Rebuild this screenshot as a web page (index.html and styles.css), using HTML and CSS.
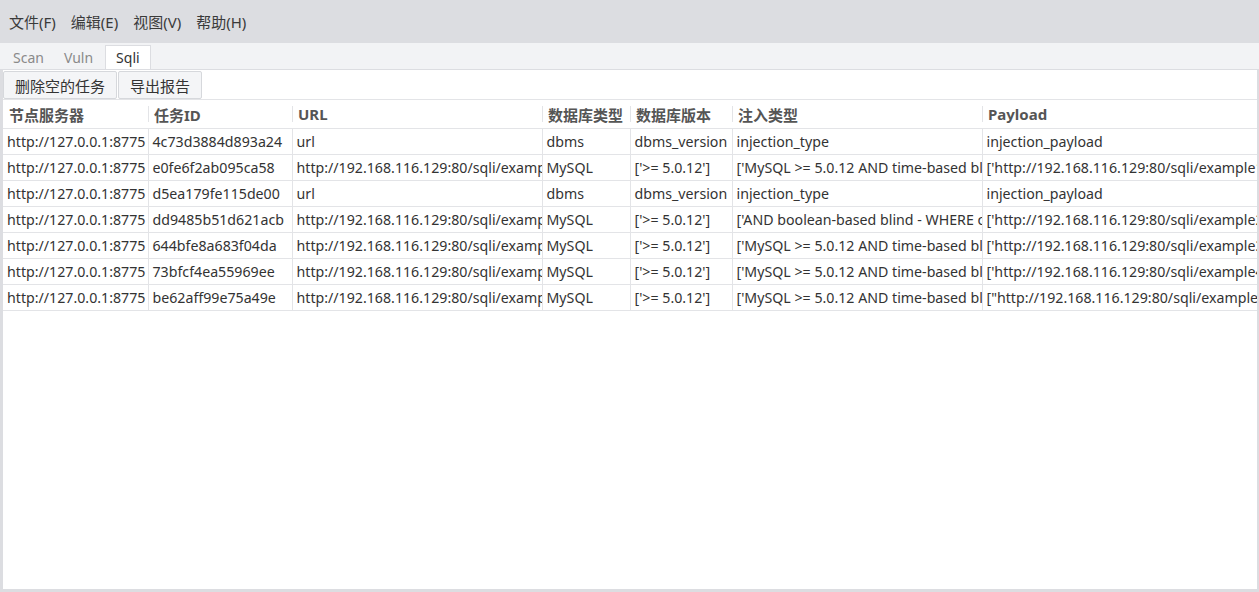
FILE: index.html
```html
<!DOCTYPE html>
<html lang="zh">
<head>
<meta charset="utf-8">
<link rel="stylesheet" href="styles.css">
</head>
<body>
<div class="menubar">
  <span class="menu">文件(F)</span>
  <span class="menu">编辑(E)</span>
  <span class="menu">视图(V)</span>
  <span class="menu">帮助(H)</span>
</div>
<div class="tabbar">
  <span class="tab">Scan</span>
  <span class="tab">Vuln</span>
  <span class="tab active">Sqli</span>
</div>
<div class="panel">
  <div class="toolbar">
    <button class="btn">删除空的任务</button>
    <button class="btn">导出报告</button>
  </div>
  <div class="tablewrap">
    <table class="grid">
      <colgroup>
        <col class="c1"><col class="c2"><col class="c3"><col class="c4"><col class="c5"><col class="c6"><col class="c7">
      </colgroup>
      <thead>
        <tr><th>节点服务器</th><th>任务ID</th><th>URL</th><th>数据库类型</th><th>数据库版本</th><th>注入类型</th><th>Payload</th></tr>
      </thead>
      <tbody>
        <tr><td>http://127.0.0.1:8775</td><td>4c73d3884d893a24</td><td>url</td><td>dbms</td><td>dbms_version</td><td>injection_type</td><td>injection_payload</td></tr>
        <tr><td>http://127.0.0.1:8775</td><td>e0fe6f2ab095ca58</td><td>http://192.168.116.129:80/sqli/example1.php?name=root</td><td>MySQL</td><td>['&gt;= 5.0.12']</td><td>['MySQL &gt;= 5.0.12 AND time-based blind (query SLEEP)']</td><td>['http://192.168.116.129:80/sqli/example1.php?name=root']</td></tr>
        <tr><td>http://127.0.0.1:8775</td><td>d5ea179fe115de00</td><td>url</td><td>dbms</td><td>dbms_version</td><td>injection_type</td><td>injection_payload</td></tr>
        <tr><td>http://127.0.0.1:8775</td><td>dd9485b51d621acb</td><td>http://192.168.116.129:80/sqli/example2.php?name=root</td><td>MySQL</td><td>['&gt;= 5.0.12']</td><td>['AND boolean-based blind - WHERE or HAVING clause']</td><td>['http://192.168.116.129:80/sqli/example2.php?name=root']</td></tr>
        <tr><td>http://127.0.0.1:8775</td><td>644bfe8a683f04da</td><td>http://192.168.116.129:80/sqli/example3.php?name=root</td><td>MySQL</td><td>['&gt;= 5.0.12']</td><td>['MySQL &gt;= 5.0.12 AND time-based blind (query SLEEP)']</td><td>['http://192.168.116.129:80/sqli/example3.php?name=root']</td></tr>
        <tr><td>http://127.0.0.1:8775</td><td>73bfcf4ea55969ee</td><td>http://192.168.116.129:80/sqli/example4.php?id=2</td><td>MySQL</td><td>['&gt;= 5.0.12']</td><td>['MySQL &gt;= 5.0.12 AND time-based blind (query SLEEP)']</td><td>['http://192.168.116.129:80/sqli/example4.php?id=2']</td></tr>
        <tr><td>http://127.0.0.1:8775</td><td>be62aff99e75a49e</td><td>http://192.168.116.129:80/sqli/example5.php?id=2</td><td>MySQL</td><td>['&gt;= 5.0.12']</td><td>['MySQL &gt;= 5.0.12 AND time-based blind (query SLEEP)']</td><td>["http://192.168.116.129:80/sqli/example5.php?id=2"]</td></tr>
      </tbody>
    </table>
  </div>
</div>
</body>
</html>
```
FILE: styles.css
```css
html, body {
  margin: 0;
  padding: 0;
  height: 100%;
}
body {
  background: #dcdde1;
  font-family: "Noto Sans", "Noto Sans CJK SC", sans-serif;
  font-size: 14px;
  color: #333;
  display: flex;
  flex-direction: column;
  overflow: hidden;
}
.menubar {
  height: 43px;
  display: flex;
  align-items: center;
  padding-left: 9px;
  gap: 15px;
  background: #dcdde1;
  color: #3a3a3a;
  flex: none;
}
.menu {
  font-size: 15px;
}
.tabbar {
  height: 26px;
  background: #f2f3f5;
  display: flex;
  align-items: flex-end;
  padding-left: 3px;
  flex: none;
  box-sizing: border-box;
}
.tab {
  height: 24px;
  line-height: 24px;
  padding: 0 9px;
  color: #8a8a8a;
  font-size: 14px;
  box-sizing: border-box;
  border: 1px solid transparent;
  border-bottom: none;
}
.tab.active {
  background: #fff;
  color: #333;
  border-color: #dcdde1;
  margin-left: 2px;
  padding: 0 10px;
}
.panel {
  flex: 1;
  margin: 0 2px 3px 3px;
  background: #fff;
  border-top: 1px solid #dcdde1;
  display: flex;
  flex-direction: column;
  overflow: hidden;
}
.toolbar {
  display: flex;
  gap: 1px;
  height: 30px;
  flex: none;
  padding-top: 1px;
  box-sizing: border-box;
  border-bottom: 1px solid #e3e4e7;
}
.btn {
  font-family: inherit;
  font-size: 15px;
  color: #333;
  background: #f4f5f7;
  border: 1px solid #d6d8dc;
  border-radius: 2px;
  height: 28px;
  padding: 0 11px;
  margin: 0;
}
.tablewrap {
  flex: 1;
  overflow: hidden;
}
.grid {
  table-layout: fixed;
  border-collapse: collapse;
  width: 1400px;
}
.c1 { width: 145px; }
.c2 { width: 144px; }
.c3 { width: 250px; }
.c4 { width: 88px; }
.c5 { width: 102px; }
.c6 { width: 250px; }
.c7 { width: 421px; }
.grid th, .grid td {
  white-space: nowrap;
  overflow: hidden;
  text-align: left;
  padding: 0 4px;
}
.grid th {
  height: 28px;
  font-size: 15px;
  font-weight: bold;
  color: #555;
  padding-left: 6px;
  position: relative;
  border-bottom: 1px solid #e3e4e7;
}
.grid th + th::before {
  content: "";
  position: absolute;
  left: 0;
  top: 6px;
  bottom: 6px;
  border-left: 1px solid #e3e4e7;
}
.grid td {
  height: 25px;
  font-size: 14.2px;
  padding: 0 1px 0 4px;
  border-bottom: 1px solid #e3e4e7;
  border-left: 1px solid #e3e4e7;
  color: #333;
}
.grid td:first-child {
  border-left: none;
}
```
